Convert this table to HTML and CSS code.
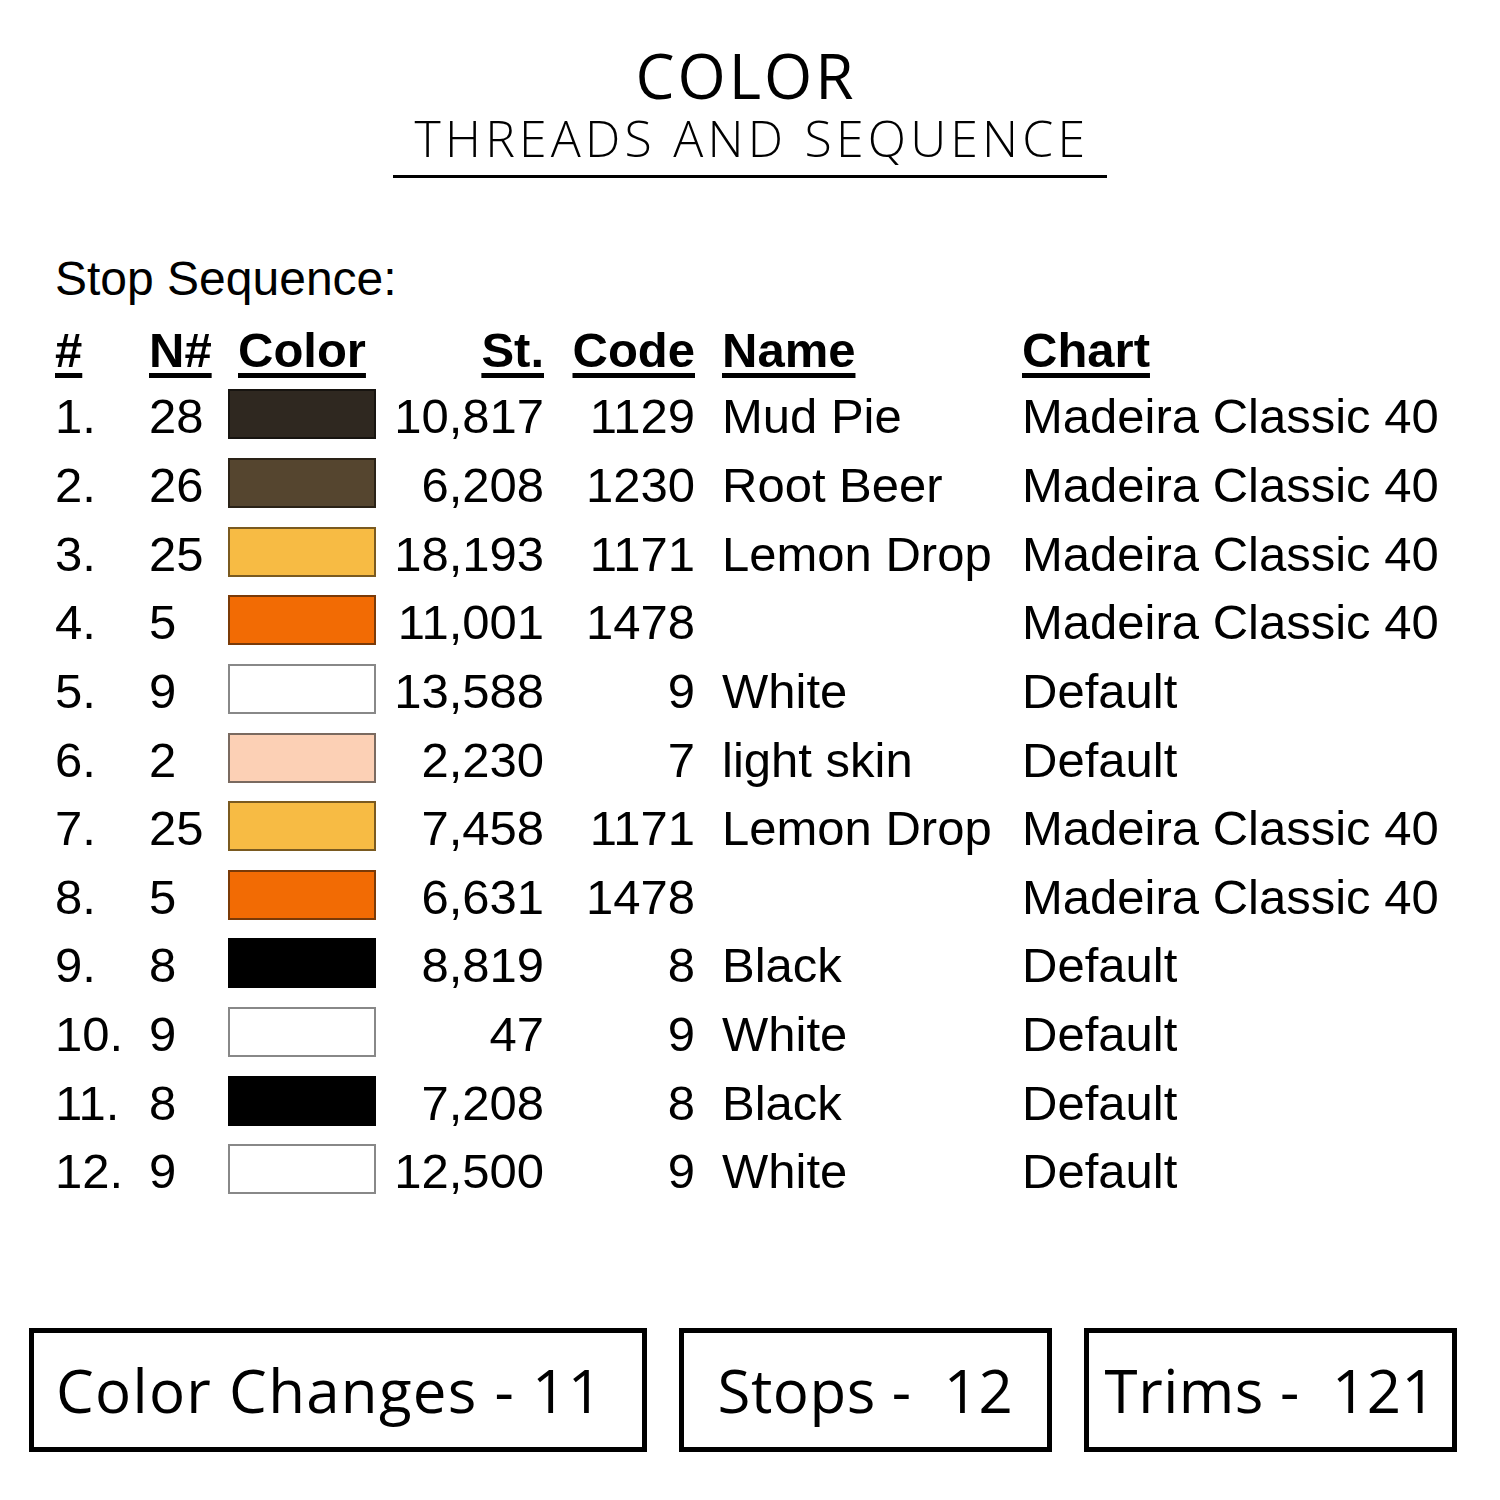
FILE: index.html
```html
<!DOCTYPE html>
<html lang="en">
<head>
<meta charset="utf-8">
<title>Color - Threads and Sequence</title>
<link rel="stylesheet" href="styles.css">
</head>
<body>
<div class="page">
  <header class="title">
    <h1 class="title-main">COLOR</h1>
    <div class="title-sub">THREADS AND SEQUENCE</div>
  </header>

  <section class="sequence">
    <div class="seq-label">Stop Sequence:</div>
    <div class="seq-table">
      <div class="th">#</div>
      <div class="th">N#</div>
      <div class="th th-color">Color</div>
      <div class="th num">St.</div>
      <div class="th num">Code</div>
      <div class="th name">Name</div>
      <div class="th">Chart</div>

      <div class="td">1.</div><div class="td">28</div><div class="td"><span class="swatch sw-mudpie"></span></div><div class="td num">10,817</div><div class="td num">1129</div><div class="td name">Mud Pie</div><div class="td">Madeira Classic 40</div>
      <div class="td">2.</div><div class="td">26</div><div class="td"><span class="swatch sw-rootbeer"></span></div><div class="td num">6,208</div><div class="td num">1230</div><div class="td name">Root Beer</div><div class="td">Madeira Classic 40</div>
      <div class="td">3.</div><div class="td">25</div><div class="td"><span class="swatch sw-lemon"></span></div><div class="td num">18,193</div><div class="td num">1171</div><div class="td name">Lemon Drop</div><div class="td">Madeira Classic 40</div>
      <div class="td">4.</div><div class="td">5</div><div class="td"><span class="swatch sw-orange"></span></div><div class="td num">11,001</div><div class="td num">1478</div><div class="td name"></div><div class="td">Madeira Classic 40</div>
      <div class="td">5.</div><div class="td">9</div><div class="td"><span class="swatch sw-white"></span></div><div class="td num">13,588</div><div class="td num">9</div><div class="td name">White</div><div class="td">Default</div>
      <div class="td">6.</div><div class="td">2</div><div class="td"><span class="swatch sw-skin"></span></div><div class="td num">2,230</div><div class="td num">7</div><div class="td name">light skin</div><div class="td">Default</div>
      <div class="td">7.</div><div class="td">25</div><div class="td"><span class="swatch sw-lemon"></span></div><div class="td num">7,458</div><div class="td num">1171</div><div class="td name">Lemon Drop</div><div class="td">Madeira Classic 40</div>
      <div class="td">8.</div><div class="td">5</div><div class="td"><span class="swatch sw-orange"></span></div><div class="td num">6,631</div><div class="td num">1478</div><div class="td name"></div><div class="td">Madeira Classic 40</div>
      <div class="td">9.</div><div class="td">8</div><div class="td"><span class="swatch sw-black"></span></div><div class="td num">8,819</div><div class="td num">8</div><div class="td name">Black</div><div class="td">Default</div>
      <div class="td">10.</div><div class="td">9</div><div class="td"><span class="swatch sw-white"></span></div><div class="td num">47</div><div class="td num">9</div><div class="td name">White</div><div class="td">Default</div>
      <div class="td">11.</div><div class="td">8</div><div class="td"><span class="swatch sw-black"></span></div><div class="td num">7,208</div><div class="td num">8</div><div class="td name">Black</div><div class="td">Default</div>
      <div class="td">12.</div><div class="td">9</div><div class="td"><span class="swatch sw-white"></span></div><div class="td num">12,500</div><div class="td num">9</div><div class="td name">White</div><div class="td">Default</div>
    </div>
  </section>

  <section class="stats">
    <div class="stat stat-changes">Color Changes - 11</div>
    <div class="stat stat-stops">Stops -&nbsp; 12</div>
    <div class="stat stat-trims">Trims -&nbsp; 121</div>
  </section>
</div>
</body>
</html>
```

FILE: styles.css
```css
html, body {
  margin: 0;
  padding: 0;
  background: #ffffff;
}

.page {
  width: 1500px;
  height: 1500px;
  box-sizing: border-box;
  padding-top: 42px;
  color: #000;
}

.title {
  display: flex;
  flex-direction: column;
  align-items: center;
}

.title-main {
  margin: 0;
  font-family: "Open Sans", "DejaVu Sans", sans-serif;
  font-weight: 500;
  font-size: 62px;
  line-height: 66px;
  height: 66px;
  letter-spacing: 3px;
  padding-right: 8px;
}

.title-sub {
  margin-top: 0;
  padding: 1px 18px 8px 22px;
  border-bottom: 3px solid #000;
  font-family: "Open Sans", "DejaVu Sans", sans-serif;
  font-weight: 350;
  font-size: 50px;
  line-height: 58px;
  letter-spacing: 4.2px;
}

.sequence {
  padding-left: 55px;
  margin-top: 73px;
  font-family: "Liberation Sans", Arial, sans-serif;
}

.seq-label {
  font-size: 48px;
  line-height: 56px;
  height: 56px;
}

.seq-table {
  margin-top: 11px;
  display: grid;
  grid-template-columns: 94px 79px 148px 168px 151px 327px auto;
  grid-template-rows: 64px repeat(12, 68.65px);
  align-items: center;
  font-size: 49px;
  line-height: 56px;
}

.th {
  font-weight: bold;
  text-decoration: underline;
  text-decoration-thickness: 5px;
  text-underline-offset: 6px;
}

.th-color {
  padding-left: 10px;
}

.num {
  text-align: right;
}

.name {
  padding-left: 27px;
}

.td {
  white-space: nowrap;
}

.swatch {
  display: block;
  width: 148px;
  height: 50px;
  box-sizing: border-box;
  border: 2px solid rgba(0, 0, 0, 0.5);
  margin-top: -4px;
}

.sw-mudpie { background: #2f2820; }
.sw-rootbeer { background: #55452f; }
.sw-lemon { background: #f7bb44; border-color: #7a5a20; }
.sw-orange { background: #f26b04; border-color: #7a3a08; }
.sw-white { background: #ffffff; border-color: #888888; }
.sw-skin { background: #fcd0b5; border-color: #7a6a60; }
.sw-black { background: #000000; }

.stats {
  margin-top: 122px;
  padding-left: 29px;
  display: flex;
  gap: 32px;
}

.stat {
  height: 124px;
  box-sizing: border-box;
  border: 5px solid #000;
  display: flex;
  align-items: center;
  justify-content: center;
  font-family: "Open Sans", "DejaVu Sans", sans-serif;
  font-weight: 500;
  font-size: 60px;
  letter-spacing: 0.5px;
  white-space: nowrap;
}

.stat-changes {
  width: 618px;
  justify-content: flex-start;
  padding-left: 22px;
  letter-spacing: 1.3px;
}
.stat-stops { width: 373px; }
.stat-trims { width: 373px; }
```
